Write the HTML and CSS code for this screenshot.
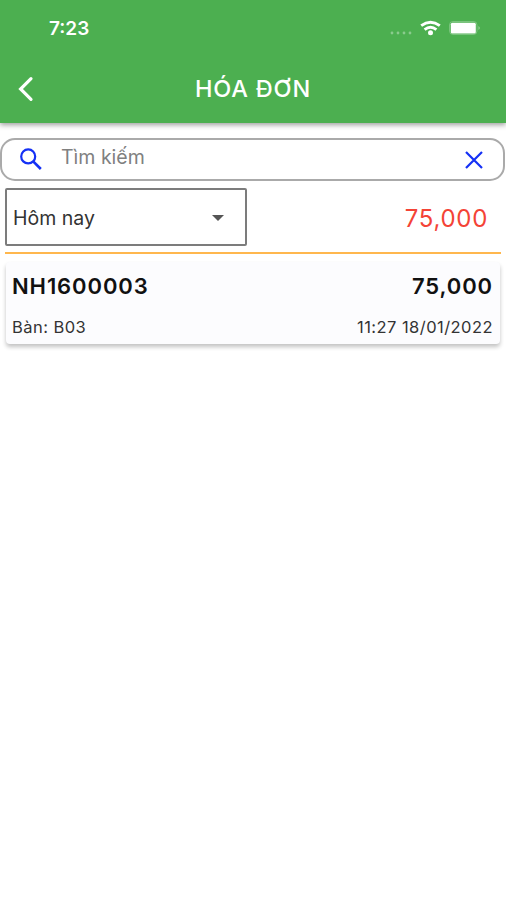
FILE: index.html
```html
<!DOCTYPE html>
<html lang="vi">
<head>
<meta charset="utf-8">
<title>Hóa đơn</title>
<link rel="stylesheet" href="styles.css">
</head>
<body>
<header class="header">
  <div class="status">
    <span class="time">7:23</span>
    <svg class="status-icons" width="94" height="24" viewBox="0 0 94 24" fill="none">
      <g fill="#fff" opacity=".35"><circle cx="6" cy="17" r="1.4"/><circle cx="12" cy="17" r="1.4"/><circle cx="18" cy="17" r="1.4"/><circle cx="24" cy="17" r="1.4"/></g>
      <g stroke="#fff" stroke-width="2.9"><path d="M35.2 9.6Q44.5 2.8 53.8 9.6"/><path d="M38.6 13.6Q44.5 9 50.4 13.6"/></g>
      <circle cx="44.5" cy="16.7" r="2.5" fill="#fff"/>
      <rect x="63.5" y="5.5" width="27.5" height="13" rx="3.5" stroke="#fff" stroke-opacity=".25"/>
      <rect x="64.8" y="6.8" width="25" height="10.6" rx="1.5" fill="#fff"/>
      <path d="M92.5 10v4q2.5-2 0-4" fill="#fff" opacity=".45"/>
    </svg>
  </div>
  <div class="bar">
    <svg class="back" width="20" height="28" viewBox="0 0 20 28" fill="none" stroke="#fff" stroke-width="3.2" stroke-linecap="round"><path d="M16 3.6L5.6 14 16 24.4"/></svg>
    <h1 class="title">HÓA ĐƠN</h1>
  </div>
</header>
<main class="content">
  <div class="search">
    <svg width="24" height="24" viewBox="0 0 24 24" fill="none" stroke="#1430f5" stroke-width="2.2"><circle cx="8.2" cy="8.4" r="7"/><path d="M13.4 13.6l7.4 7.4" stroke-width="2.7"/></svg>
    <span class="placeholder">Tìm kiếm</span>
    <svg class="clear" width="18" height="18" viewBox="0 0 18 18" stroke="#1430f5" stroke-width="2.2"><path d="M1 1l16 16M17 1L1 17"/></svg>
  </div>
  <div class="filter">
    <div class="select"><span class="period">Hôm nay</span><span class="caret"></span></div>
    <span class="total">75,000</span>
  </div>
  <article class="card">
    <div class="row main-row"><span class="code">NH1600003</span><span class="amount">75,000</span></div>
    <div class="row sub-row"><span class="table">Bàn: B03</span><span class="date">11:27 18/01/2022</span></div>
  </article>
</main>
</body>
</html>
```
FILE: styles.css
```css
* { box-sizing: border-box; }
body { margin: 0; min-height: 900px; background: #fff; color: #333; font-family: Inter, "Liberation Sans", sans-serif; white-space: nowrap; }
svg { display: block; flex: none; }
.header { height: 123px; background: #4caf50; color: #fff; box-shadow: 0 2px 5px rgba(0,0,0,.38); }
.status { display: flex; justify-content: space-between; align-items: center; height: 56px; padding: 0 26px 0 49px; }
.status-icons { overflow: visible; }
.time { font-size: 19px; font-weight: 600; }
.bar { display: grid; grid-template-columns: 40px 1fr 40px; align-items: center; height: 66px; }
.back { margin-left: 15px; }
.title { margin: 0; text-align: center; font-size: 23.5px; font-weight: 500; line-height: 30px; letter-spacing: .8px; }
.content { padding-top: 15px; }
.search { display: flex; align-items: center; height: 43px; margin: 0 1px 0 0; padding: 0 20px 0 18px; border: 2px solid #aaa; border-radius: 15px; }
.placeholder { margin: -6px 0 0 17px; flex: 1; color: #808080; font-size: 19.5px; }
.filter { display: flex; align-items: center; justify-content: space-between; margin: 0 5px; padding: 7px 13px 6px 0; border-bottom: 2px solid #ffb74d; }
.select { display: flex; align-items: center; justify-content: space-between; width: 242px; height: 58px; padding: 1px 21px 0 6px; border: 2px solid #7c7c7c; border-radius: 2px; }
.period { font-size: 19.5px; }
.caret { border: 6px solid transparent; border-top-color: #555; border-bottom: 0; }
.total { padding-top: 2px; color: #f44336; font-size: 24px; letter-spacing: .7px; }
.card { margin: 8px 6px 0; padding: 6px 7px 0 6px; height: 82px; background: #fcfcfe; border-radius: 4px; box-shadow: 0 3px 4px rgba(0,0,0,.24); }
.row { display: flex; align-items: center; justify-content: space-between; }
.main-row { height: 36px; color: #111; font-size: 22px; font-weight: 600; letter-spacing: .9px; }
.sub-row { height: 46px; font-size: 16.5px; letter-spacing: .45px; }
```
